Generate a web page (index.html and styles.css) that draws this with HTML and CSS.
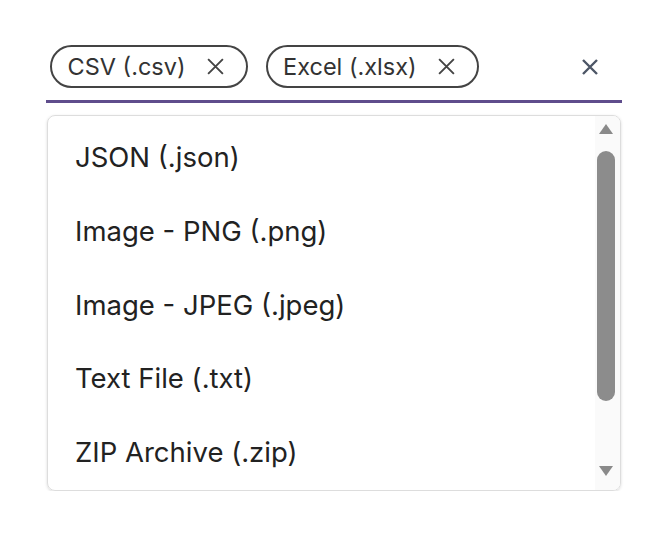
FILE: index.html
```html
<!DOCTYPE html>
<html>
<head>
  <meta charset='UTF-8'>
  <title>File type select</title>
  <link rel="stylesheet" href="styles.css">
</head>
<body>
  <div class='select'>
    <!-- Selected values -->
    <div class='field'>
      <span class='chip'>CSV (.csv)
        <svg class='chip-x' viewBox='0 0 18 18'><path d='M2 2 L16 16 M16 2 L2 16'/></svg>
      </span>
      <span class='chip'>Excel (.xlsx)
        <svg class='chip-x' viewBox='0 0 18 18'><path d='M2 2 L16 16 M16 2 L2 16'/></svg>
      </span>
      <svg class='clear-x' viewBox='0 0 18 18'><path d='M2 2 L16 16 M16 2 L2 16'/></svg>
    </div>

    <!-- Options -->
    <div class='menu'>
      <ul class='options'>
        <li>JSON (.json)</li>
        <li>Image - PNG (.png)</li>
        <li>Image - JPEG (.jpeg)</li>
        <li>Text File (.txt)</li>
        <li>ZIP Archive (.zip)</li>
      </ul>
      <div class='scrollbar'>
        <div class='arrow-up'></div>
        <div class='thumb'></div>
        <div class='arrow-down'></div>
      </div>
    </div>
  </div>
</body>
</html>
```

FILE: styles.css
```css
* { margin: 0; padding: 0; box-sizing: border-box; }
body { font-family: Inter, "Noto Sans", sans-serif; background: #fff; color: #222; }
.select { width: 576px; margin: 45px 0 0 46px; }
.field { display: flex; align-items: center; gap: 18px; padding: 0 0 12px 4px; border-bottom: 3px solid #5f4d8c; }
.chip { display: inline-flex; align-items: center; gap: 20px; height: 43px; padding: 0 21px 0 15.5px; border: 2px solid #444; border-radius: 22px; font-size: 23.5px; color: #333; }
.chip-x { width: 19px; height: 19px; stroke: #444; stroke-width: 1.8; fill: none; }
.clear-x { width: 18px; height: 18px; margin: 0 23px 0 auto; stroke: #4d5666; stroke-width: 2.4; fill: none; }
.menu { display: flex; margin: 12px 1px 0 1px; height: 376px; border: 1px solid #ddd; border-radius: 8px; box-shadow: 0 1px 3px rgba(0,0,0,0.15); overflow: hidden; }
.options { flex: 1; list-style: none; padding-top: 5px; }
.options li { height: 73.75px; line-height: 73.75px; padding-left: 27px; font-size: 27.5px; color: #222; }
.scrollbar { width: 25px; display: flex; flex-direction: column; align-items: center; padding: 8px 3px 0 0; background: #fafafa; }
.arrow-up { width: 0; height: 0; border-left: 7px solid transparent; border-right: 7px solid transparent; border-bottom: 10px solid #8a8a8a; }
.thumb { width: 18px; height: 250px; margin-top: 17px; background: #8c8c8c; border-radius: 9px; }
.arrow-down { width: 0; height: 0; margin-top: 65px; border-left: 7px solid transparent; border-right: 7px solid transparent; border-top: 10px solid #8a8a8a; }
```
